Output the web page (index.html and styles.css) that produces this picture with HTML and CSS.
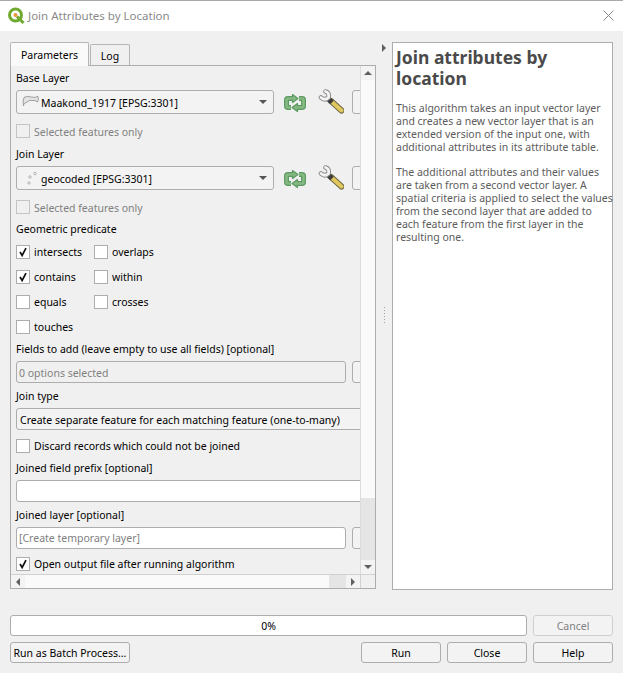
FILE: index.html
```html
<!DOCTYPE html>
<html lang="en">
<head>
<meta charset="utf-8">
<title>Join Attributes by Location</title>
<link rel="stylesheet" href="styles.css">
</head>
<body>
<svg class="defs" width="0" height="0" aria-hidden="true">
  <defs>
    <symbol id="reload" viewBox="0 0 24 24">
      <g fill="none" stroke-linejoin="round">
        <path d="M10 8.5 H5 Q3.5 8.5 3.5 10 V16 Q3.5 17.5 5 17.5 H8" stroke="#5c9a62" stroke-width="5"/>
        <path d="M14 17.5 H19 Q20.5 17.5 20.5 16 V10 Q20.5 8.5 19 8.5 H16" stroke="#5c9a62" stroke-width="5"/>
      </g>
      <path d="M9.5 4.5 L15 8.5 L9.5 12.5 Z" fill="#85b882" stroke="#5c9a62" stroke-width="1.2" stroke-linejoin="round"/>
      <path d="M14.5 13.5 L9 17.5 L14.5 21.5 Z" fill="#85b882" stroke="#5c9a62" stroke-width="1.2" stroke-linejoin="round"/>
      <g fill="none">
        <path d="M10 8.5 H5 Q3.5 8.5 3.5 10 V16 Q3.5 17.5 5 17.5 H8" stroke="#85b882" stroke-width="2.6"/>
        <path d="M14 17.5 H19 Q20.5 17.5 20.5 16 V10 Q20.5 8.5 19 8.5 H16" stroke="#85b882" stroke-width="2.6"/>
      </g>
    </symbol>
    <symbol id="wrench" viewBox="0 0 26 26">
      <path d="M13 12 L23.5 21.5" stroke="#6d6744" stroke-width="6" stroke-linecap="round" fill="none"/>
      <path d="M14 13 L23.5 21.5" stroke="#e0c75e" stroke-width="4" stroke-linecap="round" fill="none"/>
      <path d="M9.5 9.5 L14 13.5" stroke="#3c3c3c" stroke-width="5" fill="none"/>
      <path d="M7.5 2.5 Q11.5 3.5 10.5 8.5 Q7 12 3 8.5" stroke="#8a8a8a" stroke-width="4.6" fill="none" stroke-linecap="round"/>
      <path d="M7.5 2.5 Q11.5 3.5 10.5 8.5 Q7 12 3 8.5" stroke="#f4f4f4" stroke-width="2.8" fill="none" stroke-linecap="round"/>
    </symbol>
  </defs>
</svg>

<header class="titlebar">
  <svg class="logo" viewBox="0 0 18 18" aria-hidden="true">
    <circle cx="8.5" cy="8" r="6" fill="none" stroke="#6fa92f" stroke-width="3"/>
    <path d="M10 9.5 L16.5 16" stroke="#6fa92f" stroke-width="3"/>
    <circle cx="8.5" cy="8" r="2" fill="#e9973a"/>
  </svg>
  <span class="title-text">Join Attributes by Location</span>
  <svg class="close" viewBox="0 0 11 11" aria-hidden="true"><path d="M0.5 0.5 L10.5 10.5 M10.5 0.5 L0.5 10.5" stroke="#8a8a8a" stroke-width="1" fill="none"/></svg>
</header>

<main class="dialog">
  <div class="upper">
    <section class="left">
      <nav class="tabs">
        <span class="tab active">Parameters</span>
        <span class="tab">Log</span>
      </nav>
      <div class="pane">
        <div class="scrollarea">
          <div class="content">
            <label class="lbl low">Base Layer</label>
            <div class="layer-row">
              <div class="box combo w-combo">
                <svg class="layer-icon" viewBox="0 0 18 14" aria-hidden="true"><path d="M2 2.5 Q5 0.5 9 2 Q13 3 16 1.5 Q17 5 15.5 7 L13 5.5 Q8 4 3 8 Q1 10 1.5 11 Q0.5 6 2 2.5 Z" fill="#e4e4e4" stroke="#9d9d9d" stroke-width="1"/></svg>
                <span class="combo-text">Maakond_1917 [EPSG:3301]</span>
                <span class="caret"></span>
              </div>
              <svg class="ic-reload"><use href="#reload"/></svg>
              <svg class="ic-wrench"><use href="#wrench"/></svg>
              <span class="stub s-tall"></span>
            </div>
            <div class="check off disabled m-sel"><span class="cb"></span><span class="low2">Selected features only</span></div>

            <label class="lbl low m-join">Join Layer</label>
            <div class="layer-row">
              <div class="box combo w-combo">
                <svg class="layer-icon" viewBox="0 0 18 14" aria-hidden="true"><circle cx="8" cy="6" r="1.2" fill="none" stroke="#9d9d9d" stroke-width=".7"/><circle cx="13" cy="2.5" r="1.3" fill="none" stroke="#9d9d9d" stroke-width=".7"/><circle cx="7" cy="12" r="1.2" fill="none" stroke="#9d9d9d" stroke-width=".7"/></svg>
                <span class="combo-text">geocoded [EPSG:3301]</span>
                <span class="caret"></span>
              </div>
              <svg class="ic-reload"><use href="#reload"/></svg>
              <svg class="ic-wrench"><use href="#wrench"/></svg>
              <span class="stub s-tall"></span>
            </div>
            <div class="check off disabled m-sel"><span class="cb"></span><span class="low2">Selected features only</span></div>

            <label class="lbl m-geo">Geometric predicate</label>
            <div class="pred-grid">
              <div class="check on"><span class="cb"><svg viewBox="0 0 14 14"><path d="M3.5 7 L6 11 L10.5 2.5" fill="none" stroke="#111" stroke-width="2"/></svg></span><span>intersects</span></div>
              <div class="check"><span class="cb"></span><span>overlaps</span></div>
              <div class="check on"><span class="cb"><svg viewBox="0 0 14 14"><path d="M3.5 7 L6 11 L10.5 2.5" fill="none" stroke="#111" stroke-width="2"/></svg></span><span>contains</span></div>
              <div class="check"><span class="cb"></span><span>within</span></div>
              <div class="check"><span class="cb"></span><span>equals</span></div>
              <div class="check"><span class="cb"></span><span>crosses</span></div>
              <div class="check"><span class="cb"></span><span>touches</span></div>
            </div>

            <label class="lbl m-fields">Fields to add (leave empty to use all fields) [optional]</label>
            <div class="input-row m-input">
              <div class="box field grey w-field"><span class="low2">0 options selected</span></div>
              <span class="stub"></span>
            </div>

            <label class="lbl m-type">Join type</label>
            <div class="box combo wide m-input"><span class="combo-plain low2">Create separate feature for each matching feature (one-to-many)</span></div>
            <div class="check m-discard"><span class="cb"></span><span>Discard records which could not be joined</span></div>

            <label class="lbl m-prefix">Joined field prefix [optional]</label>
            <div class="box field white wide m-input"></div>

            <label class="lbl m-out">Joined layer [optional]</label>
            <div class="input-row m-input">
              <div class="box field white placeholder w-field">[Create temporary layer]</div>
              <span class="stub"></span>
            </div>
            <div class="check on m-open"><span class="cb"><svg viewBox="0 0 14 14"><path d="M3.5 7 L6 11 L10.5 2.5" fill="none" stroke="#111" stroke-width="2"/></svg></span><span>Open output file after running algorithm</span></div>
          </div>

          <div class="vbar">
            <span class="sb-btn"><i class="arr up"></i></span>
            <span class="v-track"></span>
            <span class="v-thumb"></span>
            <span class="sb-btn"><i class="arr down"></i></span>
          </div>
          <div class="hbar">
            <span class="sb-btn"><i class="arr left-a"></i></span>
            <span class="h-track"></span>
            <span class="h-thumb"></span>
            <span class="sb-btn"><i class="arr right-a"></i></span>
          </div>
          <div class="corner"></div>
        </div>
      </div>
    </section>

    <div class="splitter">
      <i class="arr right-a split-arrow"></i>
      <span class="grip"></span>
    </div>

    <aside class="help">
      <h1>Join attributes by location</h1>
      <p>This algorithm takes an input vector layer<br>and creates a new vector layer that is an<br>extended version of the input one, with<br>additional attributes in its attribute table.</p>
      <p>The additional attributes and their values<br>are taken from a second vector layer. A<br>spatial criteria is applied to select the values<br>from the second layer that are added to<br>each feature from the first layer in the<br>resulting one.</p>
    </aside>
  </div>

  <div class="progress-row">
    <div class="progress"><span class="low2">0%</span></div>
    <button class="btn w-std" disabled><span class="low2">Cancel</span></button>
  </div>
  <div class="button-row">
    <button class="btn batch"><span class="low2">Run as Batch Process…</span></button>
    <span class="spacer"></span>
    <button class="btn w-std"><span class="low2">Run</span></button>
    <button class="btn w-std"><span class="low2">Close</span></button>
    <button class="btn w-std"><span class="low2">Help</span></button>
  </div>
</main>
</body>
</html>
```

FILE: styles.css
```css
* { box-sizing: border-box; }
html, body { margin: 0; padding: 0; }
body {
  width: 623px;
  height: 673px;
  overflow: hidden;
  background: #f0f0f0;
  font-family: "Noto Sans", "DejaVu Sans", sans-serif;
  font-size: 10.5px;
  line-height: 13px;
  color: #000;
  display: flex;
  flex-direction: column;
}
.defs { position: absolute; }

.titlebar {
  height: 31px;
  flex: none;
  background: #fff;
  border-top: 1px solid #aaa;
  display: flex;
  align-items: center;
  padding: 0 9px 1px 7px;
}
.logo { width: 18px; height: 18px; flex: none; }
.title-text { margin-left: 3px; font-size: 11.5px; color: #8a8a8a; flex: 1; }
.close { width: 11px; height: 11px; flex: none; }

.dialog { flex: 1; padding: 11px 10px 10px; display: flex; flex-direction: column; }
.upper { display: flex; height: 548px; flex: none; }
.left { width: 366px; flex: none; display: flex; flex-direction: column; }

.tabs { display: flex; height: 23px; flex: none; align-items: flex-end; position: relative; z-index: 1; }
.tab {
  height: 21px;
  width: 40px;
  margin-left: 1px;
  border: 1px solid #b5b5b5;
  border-bottom: 0;
  border-radius: 2px 2px 0 0;
  background: #f0f0f0;
  display: flex;
  align-items: center;
  justify-content: center;
  padding-top: 3px;
}
.tab.active { width: 79px; margin-left: 0; background: #fafafa; margin-bottom: -1px; padding: 1px 0 0; height: 24px; }

.pane { height: 524px; width: 366px; border: 1px solid #adadad; background: #f0f0f0; }
.scrollarea {
  display: grid;
  grid-template-columns: 349px 15px;
  grid-template-rows: 508px 14px;
  height: 522px;
}
.content { overflow: hidden; padding: 5px 0 0 5px; }
.lbl { display: block; height: 13px; white-space: nowrap; }
.low { padding-top: 1px; }
.low2 { padding-top: 2px; }

.box { border: 1px solid #adadad; border-radius: 3px; }
.layer-row { display: flex; align-items: center; height: 24px; margin-top: 6px; width: 360px; }
.combo { display: flex; align-items: center; background: #f3f3f3; flex: none; white-space: nowrap; overflow: hidden; }
.w-combo { width: 258px; height: 24px; padding-left: 5px; }
.layer-icon { width: 18px; height: 14px; flex: none; margin-right: 1px; }
.combo-text { flex: 1; padding-top: 2px; }
.caret { width: 0; height: 0; border: 4px solid transparent; border-top: 4px solid #555; border-bottom: 0; margin-right: 6px; flex: none; }
.ic-reload { width: 24px; height: 24px; margin-left: 9px; flex: none; }
.ic-wrench { width: 26px; height: 26px; margin-left: 11px; flex: none; }
.stub { width: 20px; height: 22px; margin-left: 6px; flex: none; border: 1px solid #adadad; border-radius: 3px; background: #f3f3f3; }
.s-tall { height: 24px; margin-left: 8px; }

.check { display: flex; align-items: center; height: 14px; white-space: nowrap; }
.cb { width: 14px; height: 14px; flex: none; border: 1px solid #adadad; background: #fff; margin-right: 4px; display: flex; }
.cb svg { width: 12px; height: 12px; }
.disabled { color: #808080; }
.disabled .cb { background: #f0f0f0; border-color: #c4c4c4; }
.m-sel { margin-top: 10px; }
.m-join { margin-top: 9px; }
.m-geo { margin-top: 9px; }

.pred-grid { display: grid; grid-template-columns: 78px 1fr; row-gap: 11px; margin-top: 9px; }
.m-fields { margin-top: 9px; }
.input-row { display: flex; width: 360px; height: 22px; }
.m-input { margin-top: 5px; }
.field { height: 22px; padding-left: 2px; display: flex; align-items: center; flex: none; white-space: nowrap; }
.w-field { width: 330px; }
.grey { background: #f0f0f0; color: #808080; }
.white { background: #fff; }
.placeholder { color: #808080; }
.wide { width: 360px; height: 22px; }
.combo-plain { padding-left: 3px; }
.m-type { margin-top: 7px; }
.m-discard { margin-top: 9px; }
.m-prefix { margin-top: 9px; }
.m-out { margin-top: 7px; }
.m-open { margin-top: 8px; }

.vbar { position: relative; display: flex; flex-direction: column; border-left: 1px solid #dcdcdc; background: #fafafa; }
.sb-btn { width: 14px; height: 14px; flex: none; display: flex; align-items: center; justify-content: center; background: #f3f3f3; }
.v-track { flex: 1; }
.v-thumb { height: 62px; background: #e5e5e5; flex: none; }
.hbar { display: flex; border-top: 1px solid #d0d0d0; background: #fafafa; }
.h-track { flex: 1; }
.h-thumb { width: 17px; background: #e5e5e5; flex: none; }
.hbar .sb-btn { height: 13px; }
.corner { border-top: 1px solid #d0d0d0; border-left: 1px solid #d0d0d0; background: #f0f0f0; }

.arr { display: block; width: 0; height: 0; border: 4px solid transparent; }
.up { border-top: 0; border-bottom-color: #606060; }
.down { border-bottom: 0; border-top-color: #606060; }
.left-a { border-left: 0; border-right-color: #606060; }
.right-a { border-right: 0; border-left-color: #606060; }

.splitter { width: 16px; flex: none; position: relative; display: flex; justify-content: center; }
.split-arrow { margin-top: 2px; }
.grip { position: absolute; left: 8px; top: 265px; width: 1px; height: 16px; background: repeating-linear-gradient(#a0a0a0 0 1px, transparent 1px 3px); }

.help {
  width: 221px;
  flex: none;
  background: #fff;
  border: 1px solid #adadad;
  padding: 4px 3px;
  color: #5c5c5c;
}
.help h1 { margin: 0 0 13px; font-size: 17.5px; line-height: 21px; font-weight: 700; color: #4a4a4a; }
.help p { margin: 0 0 12px; white-space: nowrap; }

.progress-row { display: flex; gap: 6px; margin-top: 25px; height: 21px; flex: none; }
.progress { width: 517px; height: 21px; border: 1px solid #adadad; border-radius: 3px; background: #fff; display: flex; align-items: center; justify-content: center; }
.button-row { display: flex; gap: 6px; margin-top: 6px; height: 21px; flex: none; }
.spacer { flex: 1; }
.btn { height: 21px; border: 1px solid #adadad; border-radius: 3px; background: #f3f3f3; font: inherit; color: #000; padding: 0; white-space: nowrap; display: flex; align-items: center; justify-content: center; }
.btn:disabled { color: #808080; border-color: #cfcfcf; }
.w-std { width: 80px; }
.batch { width: 120px; }
```
